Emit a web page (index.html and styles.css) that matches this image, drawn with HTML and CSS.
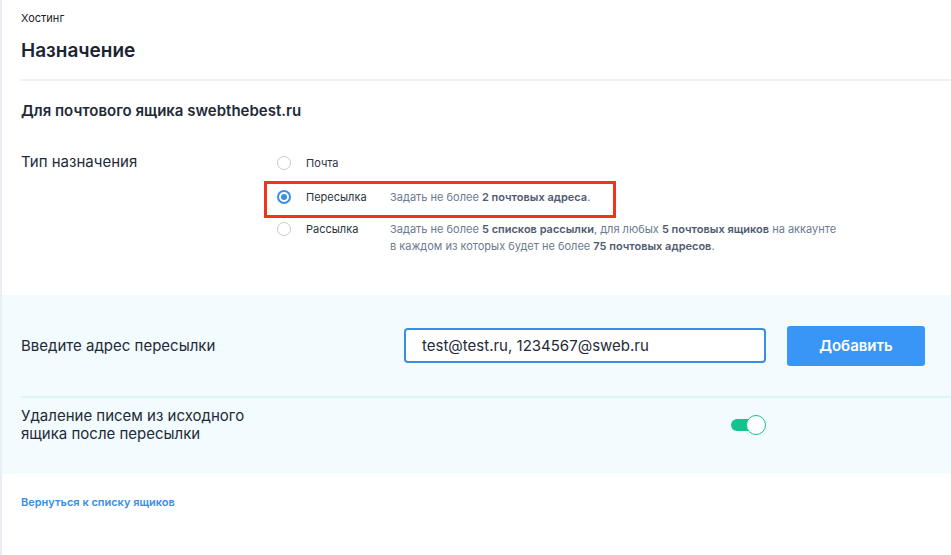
FILE: index.html
```html
<!DOCTYPE html>
<html lang="ru">
<head>
    <meta charset="UTF-8">
    <title>Назначение</title>
    <link rel="stylesheet" href="styles.css">
</head>
<body>
    <div class="page">
        <div class="crumbs">Хостинг</div>
        <h1>Назначение</h1>

        <div class="mailbox">Для почтового ящика swebthebest.ru</div>

        <div class="type-row">
            <div class="row-label">Тип назначения</div>
            <div class="options">
                <div class="option">
                    <span class="radio"></span>
                    <span class="opt-name">Почта</span>
                </div>
                <div class="option selected">
                    <span class="radio checked"></span>
                    <span class="opt-name">Пересылка</span>
                    <span class="hint">Задать не более <b>2 почтовых адреса</b>.</span>
                </div>
                <div class="option">
                    <span class="radio"></span>
                    <span class="opt-name">Рассылка</span>
                    <span class="hint">Задать не более <b>5 списков рассылки</b>, для любых <b>5 почтовых ящиков</b> на аккаунте<br>в каждом из которых будет не более <b>75 почтовых адресов</b>.</span>
                </div>
            </div>
        </div>

        <div class="forward">
            <div class="forward-row">
                <div class="row-label">Введите адрес пересылки</div>
                <input class="address" type="text" value="test@test.ru, 1234567@sweb.ru">
                <button class="add-btn">Добавить</button>
            </div>
            <div class="forward-row delete-row">
                <div class="row-label">Удаление писем из исходного<br>ящика после пересылки</div>
                <span class="toggle on"><span class="knob"></span></span>
            </div>
        </div>

        <a class="back" href="#">Вернуться к списку ящиков</a>
    </div>
</body>
</html>
```

FILE: styles.css
```css
body {
    margin: 0;
    font-family: 'Inter', 'Noto Sans', Arial, sans-serif;
    color: #1f2a37;
    background: #fff;
}

.page {
    border-left: 2px solid #e9eef5;
    min-height: 555px;
    box-sizing: border-box;
}

.crumbs {
    font-size: 11px;
    padding: 11px 0 0 19px;
    color: #222;
}

h1 {
    font-size: 19px;
    font-weight: 600;
    margin: 0 0 0 19px;
    padding: 14px 0 17px;
    border-bottom: 2px solid #eef2f7;
    color: #1b2433;
}

.mailbox {
    font-size: 15px;
    font-weight: 600;
    padding: 20px 0 0 19px;
}

.type-row {
    display: flex;
    padding: 32px 0 0 19px;
}

.row-label {
    font-size: 15px;
    color: #1f2a37;
}

.type-row .row-label {
    width: 256px;
}

.options {
    display: flex;
    flex-direction: column;
    padding-top: 3px;
}

.option {
    display: flex;
    align-items: flex-start;
    font-size: 11px;
    line-height: 17px;
    height: 34px;
}

.option:last-child {
    height: auto;
}

.option.selected {
    outline: 3px solid #f0351c;
    outline-offset: -3px;
    margin-left: -13px;
    padding: 8px 0 0 13px;
    width: 339px;
    height: 29px;
    margin-top: -8px;
    margin-bottom: 3px;
}

.radio {
    width: 14px;
    height: 14px;
    border: 1px solid #c5ccd6;
    border-radius: 50%;
    margin: 1px 15px 0 0;
    box-sizing: border-box;
    flex-shrink: 0;
    position: relative;
    background: #fff;
}

.radio.checked {
    border: 2px solid #3a8ee6;
}

.radio.checked::after {
    content: '';
    position: absolute;
    left: 2px;
    top: 2px;
    width: 6px;
    height: 6px;
    border-radius: 50%;
    background: #3a8ee6;
}

.opt-name {
    width: 84px;
    color: #2b3440;
}

.hint {
    color: #6c7a90;
}

.hint b {
    color: #4f5c70;
    font-weight: 600;
}

.forward {
    background: #f2fbfd;
    margin-top: 40px;
    padding: 0 0 0 19px;
}

.forward-row {
    display: flex;
    align-items: center;
    height: 101px;
    border-bottom: 2px solid #e0f4f8;
}

.forward-row .row-label {
    width: 383px;
}

.delete-row {
    height: 76px;
    box-sizing: border-box;
    align-items: flex-start;
    padding-top: 9px;
    border-bottom: none;
}

.delete-row .row-label {
    width: 710px;
    line-height: 18px;
}

.address {
    width: 362px;
    height: 35px;
    box-sizing: border-box;
    border: 2px solid #3a8ee6;
    border-radius: 4px;
    padding: 0 16px;
    font-family: inherit;
    font-size: 15px;
    color: #1f2a37;
    outline: none;
}

.add-btn {
    margin-left: 21px;
    width: 138px;
    height: 40px;
    border: none;
    border-radius: 3px;
    background: #3a96f6;
    color: #fff;
    font-family: inherit;
    font-size: 15px;
    font-weight: 600;
}

.toggle {
    width: 35px;
    height: 20px;
    position: relative;
    margin-top: 8px;
}

.toggle.on::before {
    content: '';
    position: absolute;
    left: 0;
    top: 4px;
    width: 28px;
    height: 12px;
    border-radius: 6px;
    background: #12c48d;
}

.toggle .knob {
    position: absolute;
    right: 0;
    top: 0;
    width: 20px;
    height: 20px;
    box-sizing: border-box;
    border: 1px solid #12c48d;
    border-radius: 50%;
    background: #fff;
}

.back {
    display: inline-block;
    margin: 21px 0 0 19px;
    font-size: 11px;
    font-weight: 600;
    color: #3a8ee6;
    text-decoration: none;
}
```
